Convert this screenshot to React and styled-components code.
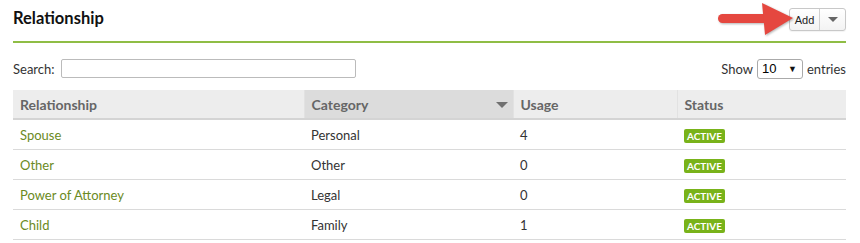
import React from "react";
import styled, { createGlobalStyle } from "styled-components";

const Global = createGlobalStyle`
  html, body { margin: 0; padding: 0; background: #fff; }
  body { font-family: Lato, "Open Sans", sans-serif; color: #333; }
`;

const Page = styled.div`
  padding: 0 14px 0 13px;
`;

const TitleBar = styled.div`
  position: relative;
  display: flex;
  justify-content: space-between;
  align-items: flex-start;
  height: 33px;
  padding-top: 8px;
  border-bottom: 2px solid #8fbd45;
`;

const Title = styled.h2`
  margin: 0;
  font-size: 16.5px;
  line-height: 21px;
  font-weight: 700;
  color: #111;
`;

const ButtonGroup = styled.div`
  display: flex;
  height: 23px;
  border: 1px solid #c8c8c8;
  border-radius: 3px;
  box-sizing: border-box;
  background: linear-gradient(#ffffff, #f3f3f3);
  box-shadow: 0 1px 1px rgba(0, 0, 0, 0.05);
`;

const GroupButton = styled.div`
  display: flex;
  align-items: center;
  justify-content: center;
  width: ${(p) => p.$w}px;
  font-family: "Liberation Sans", Arial, sans-serif;
  font-size: 11px;
  color: #222;
  border-left: ${(p) => (p.$divider ? "1px solid #d0d0d0" : "none")};
`;

const Caret = styled.span`
  width: 0;
  height: 0;
  border-left: 5px solid transparent;
  border-right: 5px solid transparent;
  border-top: 5px solid #666;
`;

const ArrowSvg = styled.svg`
  position: absolute;
  left: 699px;
  top: 0;
  overflow: visible;
  filter: drop-shadow(1px 1px 1px rgba(0, 0, 0, 0.3));
`;

const Toolbar = styled.div`
  display: flex;
  justify-content: space-between;
  align-items: center;
  margin-top: 16px;
  height: 19px;
  font-size: 13px;
  color: #333;
`;

const Field = styled.label`
  display: flex;
  align-items: center;
  gap: ${(p) => p.$gap || 5}px;
`;

const SearchInput = styled.div`
  width: 295px;
  height: 19px;
  box-sizing: border-box;
  border: 1px solid #bbb;
  border-radius: 2px;
  margin-left: 1px;
`;

const SelectBox = styled.div`
  display: flex;
  align-items: center;
  justify-content: space-between;
  width: 46px;
  height: 20px;
  box-sizing: border-box;
  border: 1px solid #aaa;
  border-radius: 3px;
  padding: 0 5px 0 4px;
  font-family: "Liberation Sans", Arial, sans-serif;
  font-size: 13px;
  color: #000;
`;

const SmallTri = styled.span`
  font-size: 9px;
  color: #111;
`;

const Table = styled.table`
  width: 100%;
  margin-top: 12px;
  border-collapse: collapse;
  table-layout: fixed;
  font-size: 13px;
`;

const Th = styled.th`
  position: relative;
  height: 28px;
  padding: 0 7px;
  text-align: left;
  font-size: 14px;
  font-weight: 700;
  color: #666;
  background: ${(p) => (p.$sorted ? "#dcdcdc" : "#ededed")};
  border-left: ${(p) => (p.$first ? "none" : "1px solid #e2e2e2")};
  border-bottom: 2px solid #d4d4d4;
`;

const SortTri = styled.span`
  position: absolute;
  right: 5px;
  top: 12px;
  width: 0;
  height: 0;
  border-left: 6px solid transparent;
  border-right: 6px solid transparent;
  border-top: 6px solid #707070;
`;

const Td = styled.td`
  height: 29px;
  padding: 0 7px;
  color: ${(p) => (p.$link ? "#6b8a23" : "#333")};
  border-bottom: 1px solid #dadada;
`;

const Badge = styled.span`
  display: inline-block;
  padding: 0 3px;
  height: 14px;
  line-height: 14px;
  border-radius: 2px;
  background: #79b31a;
  color: #fff;
  font-size: 10px;
  font-weight: 700;
  vertical-align: middle;
`;

const rows = [
  ["Spouse", "Personal", 4],
  ["Other", "Other", 0],
  ["Power of Attorney", "Legal", 0],
  ["Child", "Family", 1],
];

export default function App() {
  return (
    <>
      <Global />
      <Page>
        <TitleBar>
          <Title>Relationship</Title>
          <ArrowSvg width="84" height="40" viewBox="0 0 84 40">
            <rect x="6" y="14" width="50" height="9" rx="4.5" fill="#e5473f" />
            <polygon points="50,3 53,35 81,18" fill="#e5473f" />
          </ArrowSvg>
          <ButtonGroup>
            <GroupButton $w={29}>Add</GroupButton>
            <GroupButton $w={25} $divider>
              <Caret />
            </GroupButton>
          </ButtonGroup>
        </TitleBar>
        <Toolbar>
          <Field>
            Search:
            <SearchInput />
          </Field>
          <Field $gap={4}>
            Show
            <SelectBox>
              <span>10</span>
              <SmallTri>▼</SmallTri>
            </SelectBox>
            entries
          </Field>
        </Toolbar>
        <Table>
          <colgroup>
            <col style={{ width: 291 }} />
            <col style={{ width: 209 }} />
            <col style={{ width: 164 }} />
            <col style={{ width: 169 }} />
          </colgroup>
          <thead>
            <tr>
              <Th $first>Relationship</Th>
              <Th $sorted>
                Category
                <SortTri />
              </Th>
              <Th>Usage</Th>
              <Th>Status</Th>
            </tr>
          </thead>
          <tbody>
            {rows.map(([name, cat, usage]) => (
              <tr key={name}>
                <Td $link>{name}</Td>
                <Td>{cat}</Td>
                <Td>{usage}</Td>
                <Td>
                  <Badge>ACTIVE</Badge>
                </Td>
              </tr>
            ))}
          </tbody>
        </Table>
      </Page>
    </>
  );
}
